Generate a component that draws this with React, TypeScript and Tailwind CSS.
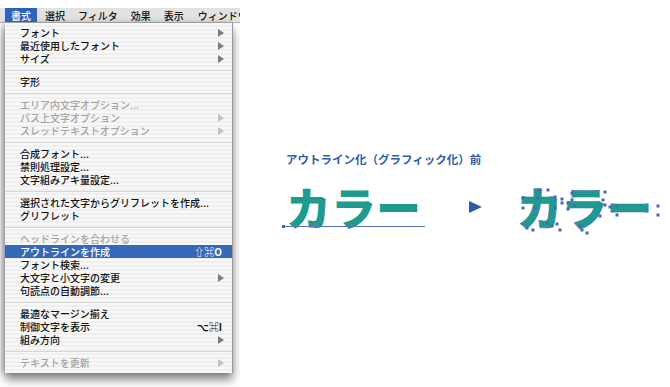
import React from "react";

type Item =
  | { sep: true }
  | {
      label: string;
      disabled?: boolean;
      arrow?: boolean;
      shortcut?: string;
      active?: boolean;
    };

const items: Item[] = [
  { label: "フォント", arrow: true },
  { label: "最近使用したフォント", arrow: true },
  { label: "サイズ", arrow: true },
  { sep: true },
  { label: "字形" },
  { sep: true },
  { label: "エリア内文字オプション...", disabled: true },
  { label: "パス上文字オプション", disabled: true, arrow: true },
  { label: "スレッドテキストオプション", disabled: true, arrow: true },
  { sep: true },
  { label: "合成フォント..." },
  { label: "禁則処理設定..." },
  { label: "文字組みアキ量設定..." },
  { sep: true },
  { label: "選択された文字からグリフレットを作成..." },
  { label: "グリフレット" },
  { sep: true },
  { label: "ヘッドラインを合わせる", disabled: true },
  { label: "アウトラインを作成", active: true, shortcut: "⇧⌘O" },
  { label: "フォント検索..." },
  { label: "大文字と小文字の変更", arrow: true },
  { label: "句読点の自動調節..." },
  { sep: true },
  { label: "最適なマージン揃え" },
  { label: "制御文字を表示", shortcut: "⌥⌘I" },
  { label: "組み方向", arrow: true },
  { sep: true },
  { label: "テキストを更新", disabled: true, arrow: true },
];

const menuBar = [
  { label: "選択", cls: "ml-[8px]" },
  { label: "フィルタ", cls: "ml-[13px]" },
  { label: "効果", cls: "ml-[13px]" },
  { label: "表示", cls: "ml-[13px]" },
  { label: "ウィンドウ", cls: "ml-[14px]" },
];

// anchor points of the outlined text, page coords minus the 240px left column
const anchors: [number, number][] = [
  [299, 190], [308, 190], [283, 198], [283, 208], [298, 198], [315, 197],
  [322, 199], [322, 203], [295, 208], [315, 208], [287, 228], [293, 230],
  [307, 223], [312, 226], [317, 224], [320, 230],
  [332, 193], [365, 192], [332, 200], [363, 200], [328, 203], [335, 206],
  [328, 209], [365, 205], [370, 207], [360, 216], [340, 226], [342, 230],
  [347, 233],
  [377, 206], [418, 206], [377, 215], [418, 215],
];

function MenuRow({ item }: { item: Item }) {
  if ("sep" in item) {
    return (
      <div className="h-[10px] flex items-center">
        <div className="h-px w-full bg-[#d6d6d6]" />
      </div>
    );
  }
  const color = item.active ? "text-white" : item.disabled ? "text-[#a4a4a4]" : "text-[#111]";
  return (
    <div
      className={`h-[13px] flex items-center justify-between whitespace-nowrap pl-[15px] pr-[8px] ${
        item.active ? "bg-[#3568b9]" : ""
      } ${color}`}
    >
      <span className="leading-[13px]">{item.label}</span>
      {item.arrow && (
        <span
          className={`w-0 h-0 border-y-[4px] border-y-transparent border-l-[6px] ${
            item.disabled ? "border-l-[#c2c2c2]" : "border-l-[#7c7c7c]"
          }`}
        />
      )}
      {item.shortcut && <span className="pr-[2px] text-[10px] font-bold">{item.shortcut}</span>}
    </div>
  );
}

export default function App() {
  return (
    <div
      className="w-[670px] h-[387px] bg-white flex overflow-hidden"
      style={{ fontFamily: '"Noto Sans CJK JP", "Noto Sans", sans-serif' }}
    >
      {/* left: the Illustrator menu */}
      <div className="w-[240px] shrink-0 overflow-hidden pt-[8px]">
        <div className="h-[15px] flex items-center bg-[#e2e2e2] border-b border-[#b4b4b4] text-[10px] font-medium text-[#111] whitespace-nowrap">
          <div className="ml-[5px] h-full px-[6px] flex items-center bg-[#2f63b8] text-white">書式</div>
          {menuBar.map((m) => (
            <div key={m.label} className={`shrink-0 ${m.cls}`}>
              {m.label}
            </div>
          ))}
        </div>
        <div className="ml-[5px] w-[228px] pt-[3px] pb-[4px] text-[10px] font-medium bg-[repeating-linear-gradient(to_bottom,#f8f8f8_0px,#f8f8f8_2px,#efefef_2px,#efefef_4px)] border-r border-[#9a9a9a] shadow-[0_7px_9px_rgba(0,0,0,0.45),-3px_0_6px_rgba(0,0,0,0.25)]">
          {items.map((it, i) => (
            <MenuRow key={i} item={it} />
          ))}
        </div>
      </div>

      {/* right: the outline example */}
      <div className="relative flex-1 pt-[152px] pl-[46px]">
        <div className="text-[11.5px] font-bold text-[#2e5ea8] leading-[15px] whitespace-nowrap">
          アウトライン化（グラフィック化）前
        </div>
        <div className="mt-[16px] flex items-center whitespace-nowrap">
          <div className="relative">
            <span className="block text-[45px] font-black leading-[48px] text-[#1e9a8e]">カラー</span>
            <div className="absolute left-[-3px] right-[-4px] bottom-[4px] h-px bg-[#5474bb]" />
            <div className="absolute left-[-4px] bottom-[3px] w-[3px] h-[3px] bg-[#3f63b0]" />
          </div>
          <span className="ml-[48px] w-0 h-0 border-y-[6px] border-y-transparent border-l-[13px] border-l-[#2d5ba6]" />
          <span className="ml-[35px] block text-[45px] font-black leading-[48px] text-[#1e9a8e] [-webkit-text-stroke:0.6px_#4a70b8]">
            カラー
          </span>
        </div>
        <svg className="absolute inset-0" width="430" height="387" viewBox="0 0 430 387">
          {anchors.map(([x, y], i) => (
            <rect key={i} x={x - 1.5} y={y - 1.5} width="3" height="3" fill="#4769b4" />
          ))}
        </svg>
      </div>
    </div>
  );
}
